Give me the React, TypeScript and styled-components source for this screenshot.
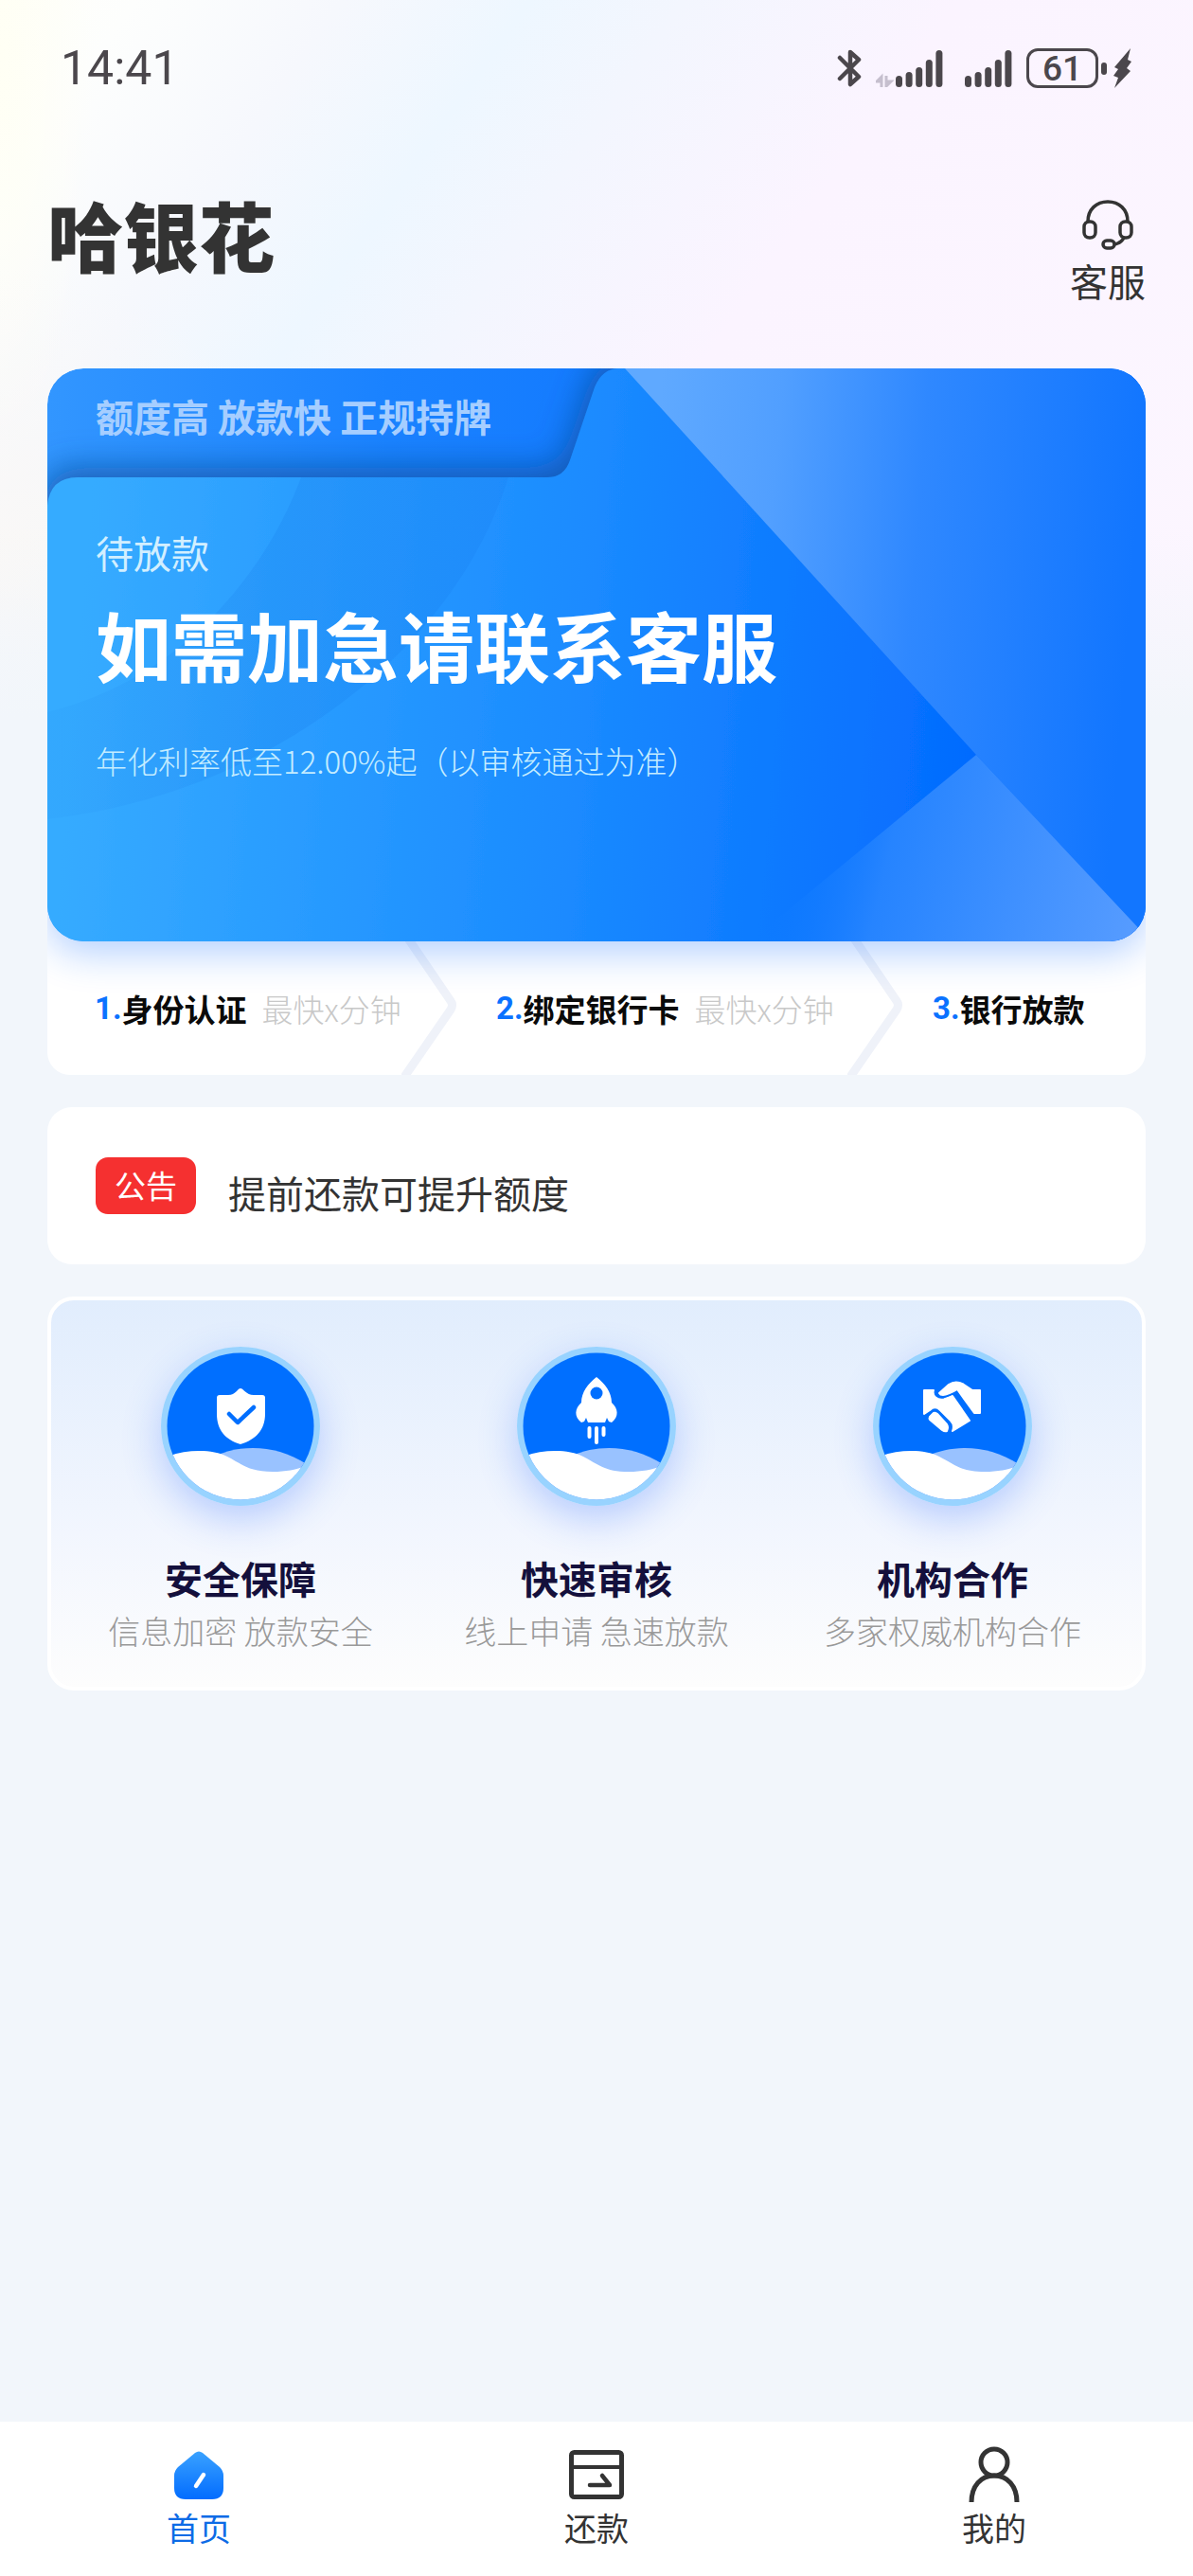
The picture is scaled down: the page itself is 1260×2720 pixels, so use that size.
import React from "react";
import styled, { createGlobalStyle } from "styled-components";

const GlobalStyle = createGlobalStyle`
  *, *::before, *::after { box-sizing: border-box; }
  body {
    margin: 0;
    background: #f2f6fb;
    font-family: "Noto Sans CJK SC", "Noto Sans", sans-serif;
    color: #333;
  }
  h1, h2, p, ol, ul { margin: 0; padding: 0; list-style: none; }
  svg { display: block; }
`;

const Page = styled.div`
  display: flex;
  flex-direction: column;
  min-height: 100vh;
  background-color: #f2f6fb;
  background-image:
    linear-gradient(180deg, rgba(242, 246, 251, 0) 560px, #f2f6fb 760px),
    radial-gradient(circle at 0 600px, #faf8f6, rgba(250, 248, 246, 0) 320px),
    radial-gradient(ellipse 100px 420px at 0 60px, #fffff4, rgba(255, 255, 248, 0)),
    linear-gradient(125deg, #fffffa 0, #fdfefd 8%, #f6f8fd 20%, #eef7ff 31%, #f3f6fe 40%, #fbf4ff 56%, #fcf6ff 100%);
  background-size: 100% 780px;
  background-repeat: no-repeat;
`;

const StatusBar = styled.div`
  display: flex;
  align-items: center;
  justify-content: space-between;
  height: 144px;
  padding: 0 64px;
  color: #4b474c;
`;

const Time = styled.time`
  font: 400 50px/60px Roboto, sans-serif;
`;

const StatusIcons = styled.div`
  display: flex;
  align-items: center;
`;

const Signals = styled.div`
  display: flex;
  gap: 23px;
  margin: 0 15px;
`;

const Battery = styled.div`
  display: flex;
  align-items: center;
  gap: 3px;
  margin-right: 7px;

  &::after {
    content: "";
    width: 6px;
    height: 13px;
    border-radius: 3px;
    background: currentColor;
  }
`;

const BatteryLevel = styled.span`
  width: 76px;
  height: 42px;
  border: 3px solid currentColor;
  border-radius: 12px;
  text-align: center;
  font: 500 37px/38px Roboto, sans-serif;
`;

const Header = styled.header`
  display: flex;
  align-items: flex-start;
  justify-content: space-between;
  padding: 64px 50px 65px;
`;

const Brand = styled.h1`
  font-size: 80px;
  line-height: 76px;
  font-weight: 900;
`;

const ServiceButton = styled.button`
  display: flex;
  flex-direction: column;
  align-items: center;
  padding: 0;
  border: 0;
  background: none;
  color: #333;
  font: inherit;
  font-size: 40px;
  line-height: 56px;
  cursor: pointer;
`;

const Main = styled.main`
  display: flex;
  flex-direction: column;
  gap: 34px;
  padding: 0 50px 34px;
`;

const LoanPanel = styled.section`
  overflow: hidden;
  border-radius: 38px 38px 24px 24px;
`;

const LoanCard = styled.div`
  position: relative;
  z-index: 1;
  overflow: hidden;
  border-radius: 38px;
  box-shadow: 0 12px 40px rgba(20, 110, 255, 0.32);
  padding: 22px 51px 161px;
  color: #fff;
`;

const CardArt = styled.svg`
  position: absolute;
  inset: 0;
  z-index: -1;
  width: 100%;
  height: 100%;
`;

const Slogan = styled.p`
  font-size: 40px;
  line-height: 56px;
  font-weight: 700;
  color: #a6ceff;
`;

const Status = styled.p`
  margin-top: 88px;
  font-size: 40px;
  line-height: 56px;
  color: #d2efff;
`;

const Headline = styled.h2`
  margin-top: 18px;
  font-size: 80px;
  line-height: 100px;
  font-weight: 700;
`;

const Rate = styled.p`
  margin-top: 44px;
  font-size: 33px;
  line-height: 60px;
  font-weight: 300;
  color: #c4ecff;
`;

const Steps = styled.ol`
  display: grid;
  grid-template-columns: 434fr 471fr 255fr;
  margin-top: -40px;
  padding-top: 40px;
  background: #fff;
`;

const Step = styled.li<{ $indent: number }>`
  display: flex;
  align-items: center;
  height: 141px;
  padding-left: ${(p) => p.$indent}px;
  font-size: 33px;
  line-height: 44px;
  font-weight: 700;
  color: #0a0a0a;
  white-space: nowrap;
`;

const StepNumber = styled.span`
  color: #0a72ff;
  font-family: Roboto, sans-serif;
  font-weight: 700;
`;

const StepHint = styled.span`
  margin-left: 16px;
  font-weight: 300;
  color: #c8c8c8;
`;

const Chevron = styled.svg`
  margin-left: auto;
  flex: none;
`;

const Notice = styled.section`
  display: flex;
  align-items: center;
  gap: 34px;
  height: 166px;
  padding: 0 51px;
  border-radius: 26px;
  background: #fff;
`;

const Badge = styled.span`
  padding: 0 20px;
  border-radius: 13px;
  background: #f53030;
  color: #fff;
  font-size: 33px;
  line-height: 58px;
  padding-bottom: 2px;
`;

const NoticeText = styled.p`
  padding-top: 14px;
  font-size: 40px;
  line-height: 56px;
`;

const Features = styled.ul`
  display: grid;
  grid-template-columns: repeat(3, 1fr);
  padding: 49px 12px 37px;
  border: 4px solid #fff;
  border-radius: 28px;
  background: linear-gradient(180deg, #e1edfd, #f2f6fe 60%, #fdfdfd);
`;

const Feature = styled.li`
  display: flex;
  flex-direction: column;
  align-items: center;
`;

const Medallion = styled.div`
  border-radius: 50%;
  box-shadow: 0 14px 40px rgba(50, 110, 255, 0.3);
`;

const FeatureTitle = styled.h2`
  margin-top: 52px;
  font-size: 40px;
  line-height: 48px;
  font-weight: 700;
  color: #14103c;
`;

const FeatureText = styled.p`
  margin-top: 10px;
  font-size: 34px;
  line-height: 44px;
  font-weight: 300;
  color: #999;
`;

const TabBar = styled.nav`
  display: grid;
  grid-template-columns: repeat(3, 1fr);
  margin-top: auto;
  padding: 26px 0 31px;
  background: #fff;
`;

const Tab = styled.a<{ $active?: boolean }>`
  display: flex;
  flex-direction: column;
  align-items: center;
  gap: 6px;
  font-size: 34px;
  line-height: 40px;
  text-decoration: none;
  color: ${(p) => (p.$active ? "#0d6be6" : "#333")};
`;

function SignalBars({ traffic }: { traffic?: boolean }) {
  const heights = [12, 16, 21, 29, 39];
  const left = traffic ? 21 : 0;
  return (
    <svg width={left + 50} height="40" viewBox={`0 0 ${left + 50} 40`} fill="currentColor">
      {traffic && (
        <path
          d="M6 40V29L1 34H6M11 28V39L16 34H11"
          fill="none"
          stroke="#c6bfce"
          strokeWidth="3"
        />
      )}
      {heights.map((h, i) => (
        <rect key={h} x={left + i * 10.6} y={40 - h} width="7" height={h} rx="3.500" />
      ))}
    </svg>
  );
}

function HeadsetIcon() {
  return (
    <svg width="60" height="60" viewBox="0 0 60 60" fill="none" stroke="currentColor" strokeWidth="3.500">
      <path d="M9 26C9 13 18 5 30 5s21 8 21 21" />
      <rect x="5" y="26" width="12" height="17" rx="5.500" />
      <rect x="43" y="26" width="12" height="17" rx="5.500" />
      <path d="M47 43c-2 4-5 6-10 7" />
      <rect x="25" y="46" width="12" height="8" rx="4" />
    </svg>
  );
}

function LoanCardArt() {
  return (
    <CardArt viewBox="0 0 1160 605" preserveAspectRatio="none" aria-hidden="true">
      <defs>
        <linearGradient id="tabFill" gradientUnits="userSpaceOnUse" x1="0" y1="0" x2="600" y2="0">
          <stop offset="0" stopColor="#3296ff" />
          <stop offset=".6" stopColor="#1a82ff" />
          <stop offset="1" stopColor="#137aff" />
        </linearGradient>
        <linearGradient id="mainFill" gradientUnits="userSpaceOnUse" x1="30" y1="330" x2="981" y2="408">
          <stop offset="0" stopColor="#36abff" />
          <stop offset=".55" stopColor="#1b8bff" />
          <stop offset="1" stopColor="#036bff" />
        </linearGradient>
        <linearGradient id="bandFill" gradientUnits="userSpaceOnUse" x1="0" y1="0" x2="540" y2="0">
          <stop offset="0" stopColor="#0a64dc" stopOpacity=".04" />
          <stop offset=".45" stopColor="#0a64dc" stopOpacity=".14" />
          <stop offset="1" stopColor="#0a64dc" stopOpacity=".1" />
        </linearGradient>
        <linearGradient id="rightFill" gradientUnits="userSpaceOnUse" x1="650" y1="0" x2="1160" y2="40">
          <stop offset="0" stopColor="#5fa9ff" />
          <stop offset=".25" stopColor="#519fff" />
          <stop offset=".55" stopColor="#2f88ff" />
          <stop offset="1" stopColor="#1276ff" />
        </linearGradient>
        <linearGradient id="lowerFill" gradientUnits="userSpaceOnUse" x1="770" y1="520" x2="1140" y2="605">
          <stop offset="0" stopColor="#0d7cff" stopOpacity="0" />
          <stop offset=".3" stopColor="#2684ff" />
          <stop offset="1" stopColor="#559bff" />
        </linearGradient>
        <filter id="edgeShadow" x="-10%" y="-20%" width="120%" height="140%">
          <feDropShadow dx="-4" dy="-10" stdDeviation="17" floodColor="#174f9e" floodOpacity=".75" />
        </filter>
      </defs>
      <rect width="1160" height="605" fill="url(#tabFill)" />
      <path
        d="M0 605V145Q3 115 32 115H528Q546 115 552 97L578 20Q586 0 604 0H1160V605Z"
        fill="url(#mainFill)"
        filter="url(#edgeShadow)"
      />
      <path
        d="M268 115Q240 190 185 251Q110 335 0 363V476C230 450 430 300 487 115Z"
        fill="url(#bandFill)"
      />
      <path d="M610 0H1160V599L981 408Z" fill="url(#rightFill)" />
      <path d="M981 408L1160 599V605H742Z" fill="url(#lowerFill)" />
    </CardArt>
  );
}

function StepChevron() {
  return (
    <Chevron width="60" height="141" viewBox="0 0 60 141" fill="none" stroke="#eff2f9" strokeWidth="9">
      <path d="M5 -6L52 63Q55 67 52 72L1 146" />
    </Chevron>
  );
}

function MedallionIcon({ id, children }: { id: string; children: React.ReactNode }) {
  return (
    <Medallion>
      <svg width="168" height="168" viewBox="0 0 168 168" aria-hidden="true">
        <clipPath id={id}>
          <circle cx="84" cy="84" r="77.500" />
        </clipPath>
        <circle cx="84" cy="84" r="84" fill="#98d3ff" />
        <g clipPath={`url(#${id})`}>
          <rect width="168" height="168" fill="#006fff" />
          <path d="M58 115C85 103 122 103 154 124L150 135H80Z" fill="#99c2ff" />
          <path d="M4 117C26 108 54 108 70 116C86 124 92 132 118 132C132 132 142 130 156 125V168H4Z" fill="#fff" />
        </g>
        {children}
      </svg>
    </Medallion>
  );
}

function ShieldMark() {
  return (
    <>
      <path
        d="M84 44C87 44 90 51 98 51H107Q110 51 110 54V71C110 88 100 98 84 103C68 98 59 88 59 71V54Q59 51 62 51H71C79 51 81 44 84 44Z"
        fill="#fff"
      />
      <path d="M72 71L81 80L98 64" fill="none" stroke="#006fff" strokeWidth="4.500" strokeLinecap="round" strokeLinejoin="round" />
    </>
  );
}

function RocketMark() {
  return (
    <>
      <path
        d="M84 32C93 39 100 48 100 59C107 65 108 74 100 80L97 79L95 75L93 80H75L73 75L71 79L68 80C60 74 61 65 68 59C68 48 75 39 84 32Z"
        fill="#fff"
      />
      <circle cx="84" cy="49" r="6.500" fill="#006fff" />
      <path d="M76.500 86V95M84 86V101M91.500 86V93" stroke="#fff" strokeWidth="4" strokeLinecap="round" />
    </>
  );
}

function HandshakeMark() {
  return (
    <g fill="#fff" stroke="#fff" strokeWidth="2" strokeLinejoin="round">
      <path d="M54 46H64C62 52 68 57 75 55.500L84 52L102 78L84 89C86 84 85 81 82 78L71 67C67 63 63 64 60 67L54 71Z" />
      <path d="M69 50L80 39C86 35 91 36 96 39L105 45H114V71H106L88 46C84 49 79 52 74 52Q71 52 69 50Z" stroke="#006fff" strokeWidth="3" />
      <path d="M70 49L80 40C86 36 91 37 96 40L105 46H113V70H107L89 45C84 48 79 51 74 51Q71 51 70 49Z" />
      <path d="M60 74L64 70Q66 69 68 71L78 82Q80 85 78 89Q76 90 73 88L60 77Q59 76 60 74Z" />
    </g>
  );
}

const features = [
  { id: "safe", title: "安全保障", text: "信息加密 放款安全", mark: <ShieldMark /> },
  { id: "fast", title: "快速审核", text: "线上申请 急速放款", mark: <RocketMark /> },
  { id: "partner", title: "机构合作", text: "多家权威机构合作", mark: <HandshakeMark /> },
];

const steps = [
  { title: "身份认证", hint: "最快x分钟", indent: 50 },
  { title: "绑定银行卡", hint: "最快x分钟", indent: 40 },
  { title: "银行放款", hint: "", indent: 30 },
];

export default function App() {
  return (
    <>
      <GlobalStyle />
      <Page>
        <StatusBar>
          <Time>14:41</Time>
          <StatusIcons>
            <svg width="26" height="42" viewBox="0 0 26 42" fill="none" stroke="currentColor" strokeWidth="4.500" strokeLinecap="round" strokeLinejoin="round">
              <path d="M3 10L23 30L14 38V4L23 12L3 32" />
            </svg>
            <Signals>
              <SignalBars traffic />
              <SignalBars />
            </Signals>
            <Battery>
              <BatteryLevel>61</BatteryLevel>
            </Battery>
            <svg width="20" height="42" viewBox="0 0 20 42" fill="currentColor">
              <path d="M18 0L1 20L5 22L0 29L5 31L1 42L18 24L14 21L19 14L15 12Z" />
            </svg>
          </StatusIcons>
        </StatusBar>

        <Header>
          <Brand>哈银花</Brand>
          <ServiceButton type="button">
            <HeadsetIcon />
            客服
          </ServiceButton>
        </Header>

        <Main>
          <LoanPanel>
            <LoanCard>
              <LoanCardArt />
              <Slogan>额度高 放款快 正规持牌</Slogan>
              <Status>待放款</Status>
              <Headline>如需加急请联系客服</Headline>
              <Rate>年化利率低至12.00%起（以审核通过为准）</Rate>
            </LoanCard>
            <Steps>
              {steps.map((step, i) => (
                <Step key={step.title} $indent={step.indent}>
                  <StepNumber>{i + 1}.</StepNumber>
                  {step.title}
                  {step.hint && <StepHint>{step.hint}</StepHint>}
                  {i < steps.length - 1 && <StepChevron />}
                </Step>
              ))}
            </Steps>
          </LoanPanel>

          <Notice>
            <Badge>公告</Badge>
            <NoticeText>提前还款可提升额度</NoticeText>
          </Notice>

          <Features>
            {features.map((f) => (
              <Feature key={f.id}>
                <MedallionIcon id={f.id}>{f.mark}</MedallionIcon>
                <FeatureTitle>{f.title}</FeatureTitle>
                <FeatureText>{f.text}</FeatureText>
              </Feature>
            ))}
          </Features>
        </Main>

        <TabBar>
          <Tab href="#home" $active aria-current="page">
            <svg width="60" height="60" viewBox="0 0 60 60">
              <defs>
                <linearGradient id="homeFill" x1="0" y1="0" x2="0" y2="1">
                  <stop offset="0" stopColor="#3aa2ff" />
                  <stop offset="1" stopColor="#026cff" />
                </linearGradient>
              </defs>
              <path
                d="M26 7Q30 4 34 7L52 22Q56 26 56 31V44Q56 56 44 56H16Q4 56 4 44V31Q4 26 8 22Z"
                fill="url(#homeFill)"
              />
              <path d="M27 42L35 30" stroke="#fff" strokeWidth="4.500" strokeLinecap="round" />
            </svg>
            首页
          </Tab>
          <Tab href="#repay">
            <svg width="60" height="60" viewBox="0 0 60 60" fill="none" stroke="currentColor" strokeWidth="5" strokeLinecap="round" strokeLinejoin="round">
              <rect x="3.500" y="6.500" width="53" height="47" rx="3" />
              <path d="M4 22H56" strokeWidth="4" />
              <path d="M23 41H44L36 31" strokeWidth="4.500" />
            </svg>
            还款
          </Tab>
          <Tab href="#me">
            <svg width="60" height="60" viewBox="0 0 60 60" fill="none" stroke="currentColor" strokeWidth="5">
              <circle cx="30" cy="17" r="14" />
              <path d="M6 59C6 42 16 31 30 31S54 42 54 59" />
            </svg>
            我的
          </Tab>
        </TabBar>
      </Page>
    </>
  );
}
